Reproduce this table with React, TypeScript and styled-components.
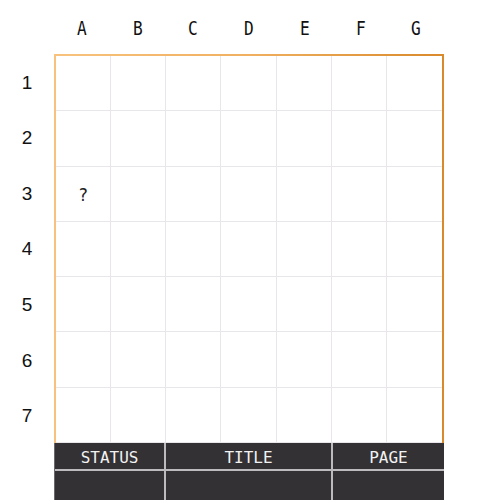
import React from "react";
import styled, { createGlobalStyle } from "styled-components";

const Global = createGlobalStyle`
  html, body { margin: 0; padding: 0; background: #ffffff; }
  body { font-family: "DejaVu Sans Mono", monospace; }
`;

const Page = styled.div`
  width: 500px;
  height: 500px;
  display: grid;
  grid-template-columns: 54px 390px 56px;
  grid-template-rows: 54px 389px 57px;
  background: #fff;
`;

const ColHeads = styled.div`
  grid-column: 2;
  grid-row: 1;
  display: grid;
  grid-template-columns: repeat(7, 1fr);
  align-items: center;
  padding-bottom: 0;
`;

const ColHead = styled.div`
  text-align: center;
  font-family: "DejaVu Sans Mono", monospace;
  font-size: 19px;
  color: #111;
  transform: scaleX(0.85);
  padding-top: 2px;
`;

const RowHeads = styled.div`
  grid-column: 1;
  grid-row: 2;
  display: grid;
  grid-template-rows: repeat(7, 1fr);
  align-items: center;
`;

const RowHead = styled.div`
  text-align: center;
  font-family: "Liberation Sans", Arial, sans-serif;
  font-size: 19px;
  color: #111;
  padding-top: 2px;
`;

const Board = styled.div`
  grid-column: 2;
  grid-row: 2;
  box-sizing: border-box;
  border: 2px solid;
  border-bottom: none;
  border-image: linear-gradient(90deg, #f8c27e, #f0b060 50%, #d98a2c) 1;
  display: grid;
  grid-template-columns: repeat(7, 1fr);
  grid-template-rows: repeat(7, 1fr);
`;

const Cell = styled.div<{ $lastCol: boolean }>`
  border-right: ${(p) => (p.$lastCol ? "none" : "1px solid #e8e6ea")};
  border-bottom: 1px solid #e8e6ea;
  display: flex;
  align-items: center;
  justify-content: center;
  padding-top: 3px;
  font-family: "DejaVu Sans Mono", monospace;
  font-size: 17px;
  color: #222;
`;

const Footer = styled.div`
  grid-column: 2;
  grid-row: 3;
  background: #333134;
  display: grid;
  grid-template-columns: 2fr 3fr 2fr;
  grid-template-rows: 28px 1fr;
  border-left: 1px solid #6a686c;
`;

const FootCell = styled.div<{ $last: boolean; $head: boolean }>`
  border-right: ${(p) => (p.$last ? "none" : "2px solid #bdbbbe")};
  border-bottom: ${(p) => (p.$head ? "2px solid #bdbbbe" : "none")};
  display: flex;
  align-items: center;
  justify-content: center;
  padding-top: 2px;
  color: #f2f2f2;
  font-family: "DejaVu Sans Mono", monospace;
  font-size: 16px;
`;

const cols = ["A", "B", "C", "D", "E", "F", "G"];
const rows = ["1", "2", "3", "4", "5", "6", "7"];
const foot = ["STATUS", "TITLE", "PAGE"];

export default function App() {
  return (
    <>
      <Global />
      <Page>
        <ColHeads>
          {cols.map((c) => (
            <ColHead key={c}>{c}</ColHead>
          ))}
        </ColHeads>
        <RowHeads>
          {rows.map((r) => (
            <RowHead key={r}>{r}</RowHead>
          ))}
        </RowHeads>
        <Board>
          {rows.map((r, ri) =>
            cols.map((c, ci) => (
              <Cell key={r + c} $lastCol={ci === 6}>
                {ri === 2 && ci === 0 ? "?" : ""}
              </Cell>
            ))
          )}
        </Board>
        <Footer>
          {foot.map((f, i) => (
            <FootCell key={f} $last={i === 2} $head>
              {f}
            </FootCell>
          ))}
          {foot.map((f, i) => (
            <FootCell key={f + "b"} $last={i === 2} $head={false} />
          ))}
        </Footer>
      </Page>
    </>
  );
}
